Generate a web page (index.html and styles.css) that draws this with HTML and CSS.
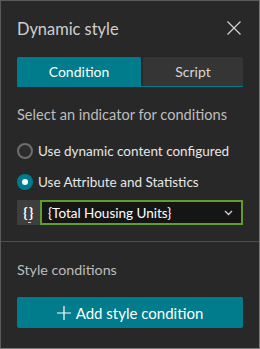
FILE: index.html
```html
<!DOCTYPE html>
<html lang="en">
<head>
    <meta charset="UTF-8">
    <meta name="viewport" content="width=device-width, initial-scale=1.0">
    <title>Dynamic style</title>
    <link rel="stylesheet" href="styles.css">
</head>
<body>
    <div class="panel">
        <!-- Header -->
        <div class="panel-header">
            <span class="panel-title">Dynamic style</span>
            <button class="close-btn" aria-label="Close">
                <svg width="14" height="14" viewBox="0 0 14 14">
                    <path d="M0.5 0.5 L13.5 13.5 M13.5 0.5 L0.5 13.5" stroke="#d4d4d4" stroke-width="1.2" fill="none"/>
                </svg>
            </button>
        </div>

        <!-- Tabs -->
        <div class="tabs">
            <div class="tab active">Condition</div>
            <div class="tab">Script</div>
        </div>

        <div class="section-label">Select an indicator for conditions</div>

        <label class="radio-row">
            <span class="radio"></span>
            <span>Use dynamic content configured</span>
        </label>
        <label class="radio-row">
            <span class="radio checked"></span>
            <span>Use Attribute and Statistics</span>
        </label>

        <div class="field-row">
            <div class="expr-btn">{}</div>
            <div class="select-box">
                <span>{Total Housing Units}</span>
                <svg width="9" height="6" viewBox="0 0 9 6">
                    <path d="M1 1 L4.5 4.5 L8 1" stroke="#d0d0d0" stroke-width="1.3" fill="none"/>
                </svg>
            </div>
        </div>

        <div class="divider"></div>

        <div class="section-label second">Style conditions</div>

        <button class="add-btn">
            <svg width="14" height="14" viewBox="0 0 14 14">
                <path d="M7 0 V14 M0 7 H14" stroke="#fff" stroke-width="1.2" fill="none"/>
            </svg>
            <span>Add style condition</span>
        </button>
    </div>
</body>
</html>
```

FILE: styles.css
```css
* {
    margin: 0;
    padding: 0;
    box-sizing: border-box;
}

body {
    background-color: #282828;
    font-family: Lato, "Open Sans", sans-serif;
}

.panel {
    width: 260px;
    height: 349px;
    background-color: #282828;
    border: 1px solid #7a7a7a;
    border-top-color: #5a5a5a;
    border-left-color: #5a5a5a;
    color: #c8c8c8;
    display: flex;
    flex-direction: column;
}

.panel-header {
    display: flex;
    justify-content: space-between;
    align-items: center;
    height: 28px;
    margin: 13px 18px 0 16px;
}

.panel-title {
    font-size: 16.4px;
    color: #cfcfcf;
}

.close-btn {
    background: none;
    border: none;
    display: flex;
    cursor: pointer;
}

.tabs {
    display: grid;
    grid-template-columns: 124px 1fr;
    gap: 2px;
    margin: 15px 16px 0 16px;
    border-bottom: 1px solid #007c8c;
}

.tab {
    height: 29px;
    display: flex;
    justify-content: center;
    align-items: center;
    font-size: 14px;
    background-color: #353535;
    color: #d6d6d6;
    border-radius: 2px 2px 0 0;
}

.tab.active {
    background-color: #007c8c;
    color: #fff;
}

.section-label {
    font-size: 14.6px;
    color: #bdbdbd;
    line-height: 20px;
    margin: 18px 16px 0 16px;
}

.radio-row {
    display: flex;
    align-items: center;
    gap: 5px;
    font-size: 13.5px;
    color: #e6e6e6;
    height: 20px;
    margin: 16px 16px 0 16px;
}

.radio-row + .radio-row {
    margin-top: 11px;
}

.radio {
    width: 16px;
    height: 16px;
    border-radius: 50%;
    border: 2px solid #6e6e6e;
    background-color: #2c2c2c;
    flex-shrink: 0;
}

.radio.checked {
    border: none;
    background-color: #007c8c;
    display: flex;
    justify-content: center;
    align-items: center;
}

.radio.checked::after {
    content: "";
    width: 6px;
    height: 6px;
    border-radius: 50%;
    background-color: #fff;
}

.field-row {
    display: flex;
    height: 25px;
    margin: 8px 16px 0 16px;
}

.expr-btn {
    width: 23px;
    background-color: #3e3e3e;
    color: #fff;
    font-size: 14px;
    font-weight: bold;
    letter-spacing: 1.5px;
    padding-left: 1px;
    display: flex;
    justify-content: center;
    align-items: center;
    position: relative;
}

.expr-btn::after {
    content: "";
    position: absolute;
    left: 11px;
    bottom: 2px;
    width: 3px;
    height: 1px;
    background-color: #ccc;
}

.select-box {
    flex: 1;
    background-color: #151515;
    border: 2px solid #5e9e2a;
    display: flex;
    justify-content: space-between;
    align-items: center;
    padding: 0 8px 0 6px;
    font-size: 13.5px;
    color: #fff;
}

.divider {
    height: 1px;
    background-color: #4e4e4e;
    margin-top: 16px;
}

.section-label.second {
    font-size: 14.3px;
    margin-top: 18px;
}

.add-btn {
    margin: 17px 16px 0 16px;
    height: 31px;
    background-color: #007c8c;
    border: none;
    border-radius: 2px;
    color: #fff;
    font-family: inherit;
    font-size: 15px;
    display: flex;
    justify-content: center;
    align-items: center;
    gap: 5px;
}
```
